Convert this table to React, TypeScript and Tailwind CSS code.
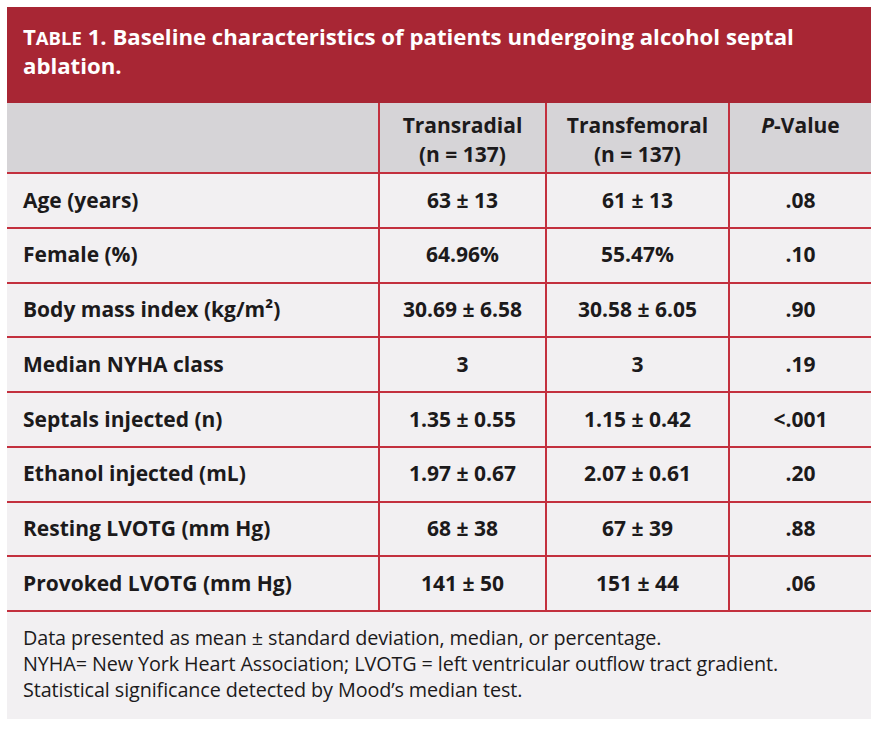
const rows = [
  { label: 'Age (years)', a: '63 ± 13', b: '61 ± 13', p: '.08' },
  { label: 'Female (%)', a: '64.96%', b: '55.47%', p: '.10' },
  { label: 'Body mass index (kg/m²)', a: '30.69 ± 6.58', b: '30.58 ± 6.05', p: '.90' },
  { label: 'Median NYHA class', a: '3', b: '3', p: '.19' },
  { label: 'Septals injected (n)', a: '1.35 ± 0.55', b: '1.15 ± 0.42', p: '<.001' },
  { label: 'Ethanol injected (mL)', a: '1.97 ± 0.67', b: '2.07 ± 0.61', p: '.20' },
  { label: 'Resting LVOTG (mm Hg)', a: '68 ± 38', b: '67 ± 39', p: '.88' },
  { label: 'Provoked LVOTG (mm Hg)', a: '141 ± 50', b: '151 ± 44', p: '.06' },
];

const cols = 'grid grid-cols-[371px_167px_183px_143px]';

export default function App() {
  return (
    <div className="min-h-[730px] bg-white pt-[7px] pl-[7px]" style={{ fontFamily: '"Open Sans", "Noto Sans", sans-serif' }}>
      <div className="w-[864px] bg-[#f2f0f2] text-[#1c1a1b]">
        {/* title bar */}
        <div className="h-[96px] bg-[#a82634] px-[16px] pt-[15px] text-white text-[22.2px] font-bold leading-[29px]">
          T<span className="text-[18.5px] leading-none">ABLE</span> 1. Baseline characteristics of patients undergoing alcohol septal ablation.
        </div>

        {/* column heads */}
        <div className={`${cols} h-[71px] bg-[#d6d4d7] border-b-2 border-[#c3303e] text-[21px] font-bold leading-[29px]`}>
          <div />
          <div className="border-l-2 border-[#c3303e] pt-[8px] text-center">Transradial<br />(n = 137)</div>
          <div className="border-l-2 border-[#c3303e] pt-[8px] text-center">Transfemoral<br />(n = 137)</div>
          <div className="border-l-2 border-[#c3303e] pt-[8px] text-center"><i>P</i>-Value</div>
        </div>

        {/* body */}
        {rows.map((r, i) => (
          <div key={i} className={`${cols} h-[54.75px] border-b-2 border-[#c3303e] text-[21px] font-bold`}>
            <div className="flex items-center pl-[16px]">{r.label}</div>
            <div className="flex items-center justify-center border-l-2 border-[#c3303e]">{r.a}</div>
            <div className="flex items-center justify-center border-l-2 border-[#c3303e]">{r.b}</div>
            <div className="flex items-center justify-center border-l-2 border-[#c3303e]">{r.p}</div>
          </div>
        ))}

        {/* notes */}
        <div className="h-[107px] px-[16px] pt-[13px] text-[19.8px] leading-[26px] tracking-[-0.1px]">
          <p>Data presented as mean ± standard deviation, median, or percentage.</p>
          <p>NYHA= New York Heart Association; LVOTG = left ventricular outflow tract gradient.</p>
          <p>Statistical significance detected by Mood’s median test.</p>
        </div>
      </div>
    </div>
  );
}
